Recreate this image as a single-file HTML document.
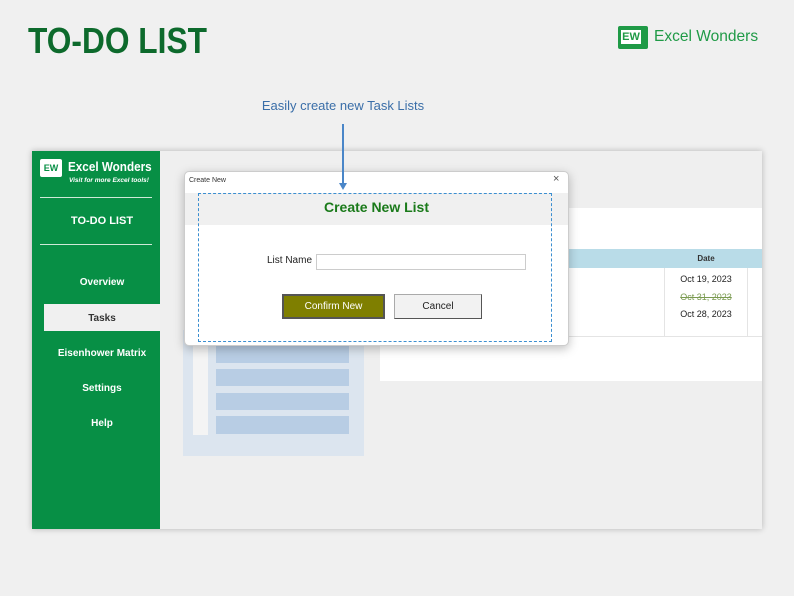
<!DOCTYPE html><html><head><style>
*{margin:0;padding:0;box-sizing:border-box}
body{width:794px;height:596px;background:#f0f0f0;font-family:"Liberation Sans",sans-serif;position:relative;overflow:hidden}
.a{position:absolute;white-space:nowrap}
.nav{position:absolute;left:6px;width:128px;text-align:center;color:#fff;font-size:10px;font-weight:bold}
</style></head><body>
<div class="a" style="left:28px;top:20px;font-size:36px;font-weight:900;color:#0d6a2c;transform:scaleX(0.88);transform-origin:left">TO-DO LIST</div>
<div class="a" style="left:618px;top:26px;width:30px;height:23px;background:#1f9a46;border-radius:2px"></div>
<div class="a" style="left:621px;top:30px;width:20px;height:14px;background:#fff;color:#1f9a46;font-size:11px;font-weight:bold;text-align:center;line-height:14px">EW</div>
<div class="a" style="left:654px;top:28px;font-size:16px;color:#1f9a46;transform:scaleX(0.97);transform-origin:left">Excel Wonders</div>
<div class="a" style="left:200px;top:98px;width:286px;text-align:center;font-size:13px;color:#3a6ea8">Easily create new Task Lists</div>

<div class="a" style="left:32px;top:151px;width:730px;height:378px;background:#efefef;box-shadow:0 0 6px rgba(0,0,0,.25)"></div>
<div class="a" style="left:32px;top:151px;width:128px;height:378px;background:#078f45">
 <div class="a" style="left:8px;top:8px;width:22px;height:18px;background:#fff;border-radius:2px;color:#078f45;font-size:9px;font-weight:bold;text-align:center;line-height:18px">EW</div>
 <div class="a" style="left:36px;top:8px;font-size:13px;color:#fff;font-weight:bold;transform:scaleX(0.9);transform-origin:left">Excel Wonders</div>
 <div class="a" style="left:37px;top:26px;font-size:6.5px;color:#fff;font-style:italic;font-weight:bold">Visit for more Excel tools!</div>
 <div class="a" style="left:8px;top:46px;width:112px;height:1px;background:#cfe9d7"></div>
 <div class="nav" style="top:64px;font-size:11px">TO-DO LIST</div>
 <div class="a" style="left:8px;top:93px;width:112px;height:1px;background:#cfe9d7"></div>
 <div class="nav" style="top:126px">Overview</div>
 <div class="a" style="left:12px;top:153px;width:116px;height:27px;background:#f0f0f0"></div>
 <div class="nav" style="top:162px;color:#333">Tasks</div>
 <div class="nav" style="top:197px">Eisenhower Matrix</div>
 <div class="nav" style="top:232px">Settings</div>
 <div class="nav" style="top:267px">Help</div>
</div>
<div class="a" style="left:183px;top:330px;width:181px;height:126px;background:#dce5ef"></div>
<div class="a" style="left:193px;top:330px;width:15px;height:105px;background:#f4f4f4"></div>
<div class="a" style="left:216px;top:346px;width:133px;height:17px;background:#b8cde4"></div>
<div class="a" style="left:216px;top:369px;width:133px;height:17px;background:#b8cde4"></div>
<div class="a" style="left:216px;top:393px;width:133px;height:17px;background:#b8cde4"></div>
<div class="a" style="left:216px;top:416px;width:133px;height:18px;background:#b8cde4"></div>
<div class="a" style="left:380px;top:208px;width:382px;height:173px;background:#fff"></div>
<div class="a" style="left:380px;top:249px;width:382px;height:19px;background:#b9dce8"></div>
<div class="a" style="left:665px;top:254px;width:82px;text-align:center;font-size:8px;font-weight:bold;color:#333">Date</div>
<div class="a" style="left:664px;top:268px;width:1px;height:68px;background:#e4e4e4"></div>
<div class="a" style="left:747px;top:268px;width:1px;height:68px;background:#e4e4e4"></div>
<div class="a" style="left:380px;top:336px;width:382px;height:1px;background:#e4e4e4"></div>
<div class="a" style="left:665px;top:271px;width:82px;text-align:center;font-size:9px;color:#222;line-height:17.5px">Oct 19, 2023<br><span style="color:#7a9a50;text-decoration:line-through">Oct 31, 2023</span><br>Oct 28, 2023</div>

<div class="a" style="left:184px;top:171px;width:385px;height:175px;background:#fff;border:1px solid #ccc;border-radius:5px;box-shadow:0 3px 10px rgba(0,0,0,.25)">
 <div class="a" style="left:4px;top:5px;font-size:7px;color:#333">Create New</div>
 <div class="a" style="left:368px;top:1px;font-size:11px;color:#555">×</div>
 <div class="a" style="left:0;top:21px;width:383px;height:32px;background:#f0f0f0"></div>
 <div class="a" style="left:0;top:27px;width:383px;text-align:center;font-size:14px;font-weight:bold;color:#1a7a1a">Create New List</div>
 <div class="a" style="left:82px;top:83px;font-size:10px;color:#222">List Name</div>
 <div class="a" style="left:131px;top:82px;width:210px;height:16px;border:1px solid #ccc;background:#fff"></div>
 <div class="a" style="left:97px;top:122px;width:103px;height:25px;background:#7f7f00;border:2px solid #555;color:#fff;font-size:10px;text-align:center;line-height:21px">Confirm New</div>
 <div class="a" style="left:209px;top:122px;width:88px;height:25px;background:#f2f2f2;border:1px solid #aaa;border-right-color:#555;border-bottom-color:#555;color:#222;font-size:10px;text-align:center;line-height:23px">Cancel</div>
 <div class="a" style="left:13px;top:21px;width:354px;height:149px;border:1.5px dashed #3b8ed0"></div>
</div>
<div class="a" style="left:342px;top:124px;width:2px;height:60px;background:#4a86c8"></div>
<div class="a" style="left:339px;top:183px;width:0;height:0;border-left:4px solid transparent;border-right:4px solid transparent;border-top:7px solid #4a86c8"></div>
</body></html>
